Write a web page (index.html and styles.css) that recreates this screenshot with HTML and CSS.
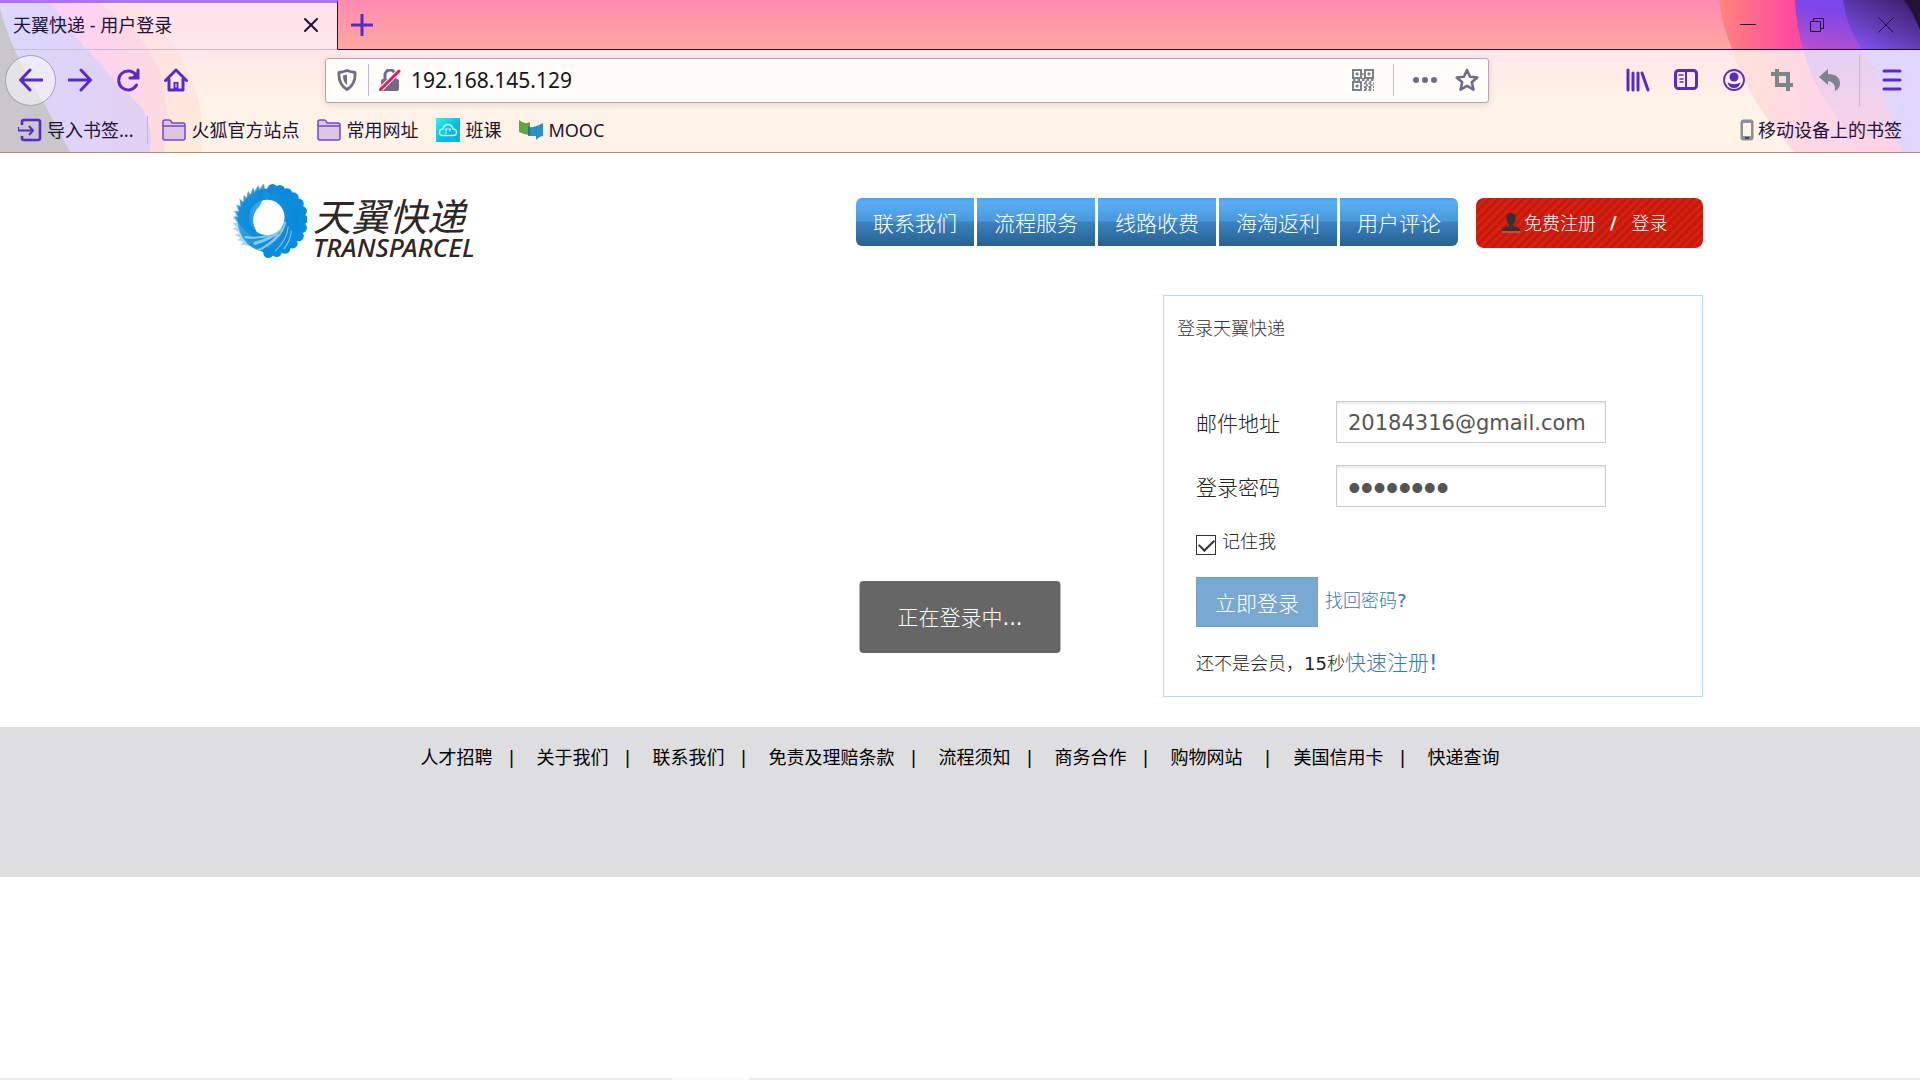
FILE: index.html
```html
<!DOCTYPE html>
<html lang="zh-CN">
<head>
<meta charset="utf-8">
<title>天翼快递 - 用户登录</title>
<link rel="stylesheet" href="styles.css">
</head>
<body>
<header class="browser">
  <svg class="theme theme-left" width="210" height="152" viewBox="0 0 210 152" aria-hidden="true">
    <defs>
      <linearGradient id="l1" x1="0" y1="0" x2="0" y2="1"><stop offset="0" stop-color="#ffdfe6"/><stop offset="1" stop-color="#ffead9"/></linearGradient>
      <linearGradient id="l2" x1="0" y1="0" x2="1" y2="0"><stop offset=".4" stop-color="#fcd0f6"/><stop offset="1" stop-color="#ffdadf"/></linearGradient>
      <linearGradient id="l3" x1="0" y1="0" x2="1" y2="0"><stop offset="0" stop-color="#dcd8fc"/><stop offset="1" stop-color="#e2d0f2"/></linearGradient>
      <linearGradient id="l4" x1="0" y1="0" x2="1" y2="0"><stop offset="0" stop-color="#dcd7fd"/><stop offset="1" stop-color="#dad2f5"/></linearGradient>
    </defs>
    <path d="M0 3H132Q188 50 200 107Q203 130 201 152H0Z" fill="url(#l1)"/>
    <path d="M0 3H98Q152 34 164 88Q170 118 164 152H0Z" fill="url(#l2)"/>
    <path d="M0 3H50Q76 42 142 108Q154 128 150 152H0Z" fill="url(#l3)"/>
    <path d="M0 3H50Q76 42 104 66L70 152H0Z" fill="url(#l4)" opacity=".6"/>
    <path d="M0 8Q10 50 45 105L70 152H0Z" fill="#c9c6cc"/>
    <path d="M10 49.500H210" stroke="#c9bccb"/>
  </svg>
  <svg class="theme theme-right" width="240" height="152" viewBox="0 0 240 152" aria-hidden="true">
    <defs>
      <linearGradient id="r1" x1="0" y1="0" x2="1" y2="0"><stop offset="0" stop-color="#ff857c"/><stop offset=".35" stop-color="#ff4b9f"/></linearGradient>
      <linearGradient id="r2" x1="0" y1="1" x2=".4" y2="0"><stop offset="0" stop-color="#ba50cb"/><stop offset=".8" stop-color="#7b46ea"/></linearGradient>
      <linearGradient id="r3" x1="0" y1="1" x2=".8" y2="0"><stop offset="0" stop-color="#8658ff"/><stop offset="1" stop-color="#402070"/></linearGradient>
      <linearGradient id="r4" x1="0" y1="0" x2="1" y2="0"><stop offset="0" stop-color="#ffe2d8"/><stop offset=".5" stop-color="#ffd5e8"/></linearGradient>
      <linearGradient id="r5" x1="0" y1="0" x2="0" y2="1"><stop offset="0" stop-color="#e2d0f3"/><stop offset="1" stop-color="#ffd3e4"/></linearGradient>
    </defs>
    <path d="M39 0Q42 26 52 49H240V0Z" fill="url(#r1)"/>
    <path d="M115 0Q116 26 123 49H240V0Z" fill="url(#r2)"/>
    <path d="M163 0Q166 26 182 49H240V0Z" fill="url(#r3)"/>
    <path d="M224 0Q234 14 240 30V0Z" fill="#241138"/>
    <path d="M52 50Q68 100 114 152H240V50Z" fill="url(#r4)"/>
    <path d="M123 50Q134 90 160 120L180 152H240V50Z" fill="url(#r5)"/>
    <path d="M182 50Q206 90 221 152H240V50Z" fill="#e1d6ff"/>
  </svg>

  <div class="tabs">
    <div class="tab">
      <span>天翼快递 - 用户登录</span>
      <button class="bare" aria-label="关闭标签页"><svg width="16" height="16" viewBox="0 0 16 16"><path d="M2 2L14 14M14 2L2 14" stroke="#20123a" stroke-width="2" stroke-linecap="round"/></svg></button>
    </div>
    <button class="bare new-tab" aria-label="新建标签页"><svg width="22" height="22" viewBox="0 0 22 22"><path d="M11 1V21M1 11H21" stroke="#592acb" stroke-width="3" stroke-linecap="round"/></svg></button>
    <div class="window-buttons">
      <button class="bare" aria-label="最小化"><svg width="16" height="16" viewBox="0 0 16 16"><path d="M0 7.500H16" stroke="#20123a"/></svg></button>
      <button class="bare" aria-label="还原"><svg width="16" height="16" viewBox="0 0 16 16" fill="none" stroke="#20123a"><path d="M1.500 4.500H11.500V14.500H1.500ZM4.500 4.500V1.500H14.500V11.500H11.500"/></svg></button>
      <button class="bare" aria-label="关闭"><svg width="16" height="16" viewBox="0 0 16 16"><path d="M.5 .5L15.500 15.500M15.500 .5L.5 15.500" stroke="#20123a"/></svg></button>
    </div>
  </div>

  <div class="toolbar">
    <button class="bare back" aria-label="后退"><svg class="ico" viewBox="0 0 24 24"><path d="M23 12H2M11 2L1.500 12L11 22"/></svg></button>
    <button class="bare slot" aria-label="前进"><svg class="ico" viewBox="0 0 24 24"><path d="M1 12H22M13 2L22.500 12L13 22"/></svg></button>
    <button class="bare slot" aria-label="刷新"><svg class="ico" viewBox="0 0 24 24"><path d="M20 7A9.500 9.500 0 1 0 20.500 17"/><path d="M22 2V10H14" stroke-linejoin="miter"/><path d="M22 3V10H15Z" fill="#592acb" stroke="none"/></svg></button>
    <button class="bare slot" aria-label="主页"><svg class="ico" viewBox="0 0 24 24"><path d="M1.500 12.500L12 2L22.500 12.500M5 11V22H19V11"/><path d="M12 14V22" stroke-width="5" stroke-linecap="butt"/><path d="M12 16V19" stroke="#fff" stroke-width="1"/></svg></button>
    <span class="spring"></span>
    <div class="urlbar">
      <svg class="shield" width="20" height="22" viewBox="0 0 20 22"><path d="M2 3.500Q6 3 10 1.500Q14 3 18 3.500Q19 15 10 20.500Q1 15 2 3.500Z" fill="none" stroke="#756a85" stroke-width="2.800" stroke-linejoin="round"/><path d="M10 5.500V16Q6 13 6 6.500Z" fill="#756a85"/></svg>
      <span class="divider"></span>
      <svg class="lock" width="22" height="22" viewBox="0 0 22 22"><path d="M6 11V6A5 5 0 0 1 16 6V11" fill="none" stroke="#756a85" stroke-width="3"/><rect x="2" y="10" width="18" height="12" rx="2" fill="#756a85"/><path d="M2 20L20 2" stroke="#fffafa" stroke-width="5"/><path d="M1.500 20.500L20 2" stroke="#ff0f4d" stroke-width="3" stroke-linecap="round"/></svg>
      <input type="text" aria-label="地址" value="192.168.145.129">
      <svg width="22" height="22" viewBox="0 0 22 22" fill="none" stroke="#7c828c" stroke-width="2"><path d="M1 1H9V9H1ZM13 1H21V9H13ZM1 13H9V21H1Z"/><path d="M4 4H6V6H4ZM16 4H18V6H16ZM4 16H6V18H4Z" fill="#7c828c" stroke-width="1"/><path d="M9 5H13M11 9V13M1 11H22M12 14.500H22M12 18H22M12 21H22" stroke-dasharray="2.500 2"/><path d="M13 12.800H22M14 16.200H22M13 19.600H22" stroke-dasharray="2 2.500"/></svg>
      <span class="divider tail"></span>
      <svg width="24" height="22" viewBox="0 0 24 22" fill="#756a85"><circle cx="3" cy="11" r="3"/><circle cx="12" cy="11" r="3"/><circle cx="21" cy="11" r="3"/></svg>
      <svg class="star" width="24" height="24" viewBox="0 0 24 24"><path d="M12 2L15 8.800L22.300 9.500L16.800 14.300L18.500 21.700L12 17.800L5.500 21.700L7.200 14.300L1.700 9.500L9 8.800Z" fill="none" stroke="#756a85" stroke-width="2.600" stroke-linejoin="round"/></svg>
    </div>
    <span class="spring"></span>
    <button class="bare slot" aria-label="书签库"><svg class="ico" viewBox="0 0 24 24" stroke-linecap="round"><path d="M2 2V22M7 5V22M12 5V22M16 5L22 22"/></svg></button>
    <button class="bare slot" aria-label="侧栏"><svg class="ico" viewBox="0 0 24 24"><rect x="1.500" y="2.500" width="21" height="18" rx="3"/><path d="M12 3V20" stroke-width="2"/><path d="M5 7H9M6 11H9M6 14H9" stroke-width="1.500"/></svg></button>
    <button class="bare slot" aria-label="账户"><svg class="ico" viewBox="0 0 24 24"><circle cx="12" cy="12" r="10" stroke-width="1.800"/><circle cx="12" cy="9" r="4.500" fill="#592acb" stroke="none"/><path d="M5.500 14.500Q12 18 18.500 14.500Q17 20 12 20Q7 20 5.500 14.500Z" fill="#592acb" stroke="none"/></svg></button>
    <button class="bare slot" aria-label="截图"><svg class="ico crop" viewBox="0 0 24 24"><path d="M7 1V17H23M1 6H18V23"/></svg></button>
    <button class="bare slot" aria-label="撤销"><svg class="ico" viewBox="0 0 24 24"><path d="M1 9L10 1V6Q22 6 22 16Q22 20 17 23Q18 14 10 13V17Z" fill="#7c858e" stroke="none"/></svg></button>
    <span class="divider tall"></span>
    <button class="bare slot" aria-label="菜单"><svg class="ico" viewBox="0 0 24 24"><path d="M4 3H20M4 12H20M4 21H20"/></svg></button>
  </div>

  <nav class="bookmarks" aria-label="书签">
    <a href="#"><svg class="bm" viewBox="0 0 24 24" fill="none" stroke="#592acb" stroke-width="2.600"><path d="M4 7V4Q4 2 6 2H20Q22 2 22 4V20Q22 22 20 22H6Q4 22 4 20V18"/><path d="M0 9V12.500H14M11 8L15 12.500L11 17" stroke-width="2"/></svg>导入书签...</a>
    <span class="divider"></span>
    <a href="#"><svg class="bm" viewBox="0 0 24 24"><path d="M1 20V4Q1 2 3 2H7Q9 2 10 5H21Q23 5 23 7V20Q23 22 21 22H3Q1 22 1 20ZM1 8H23" fill="#dcc6e0" stroke="#7047cf" stroke-width="1.500"/></svg>火狐官方站点</a>
    <a href="#"><svg class="bm" viewBox="0 0 24 24"><path d="M1 20V4Q1 2 3 2H7Q9 2 10 5H21Q23 5 23 7V20Q23 22 21 22H3Q1 22 1 20ZM1 8H23" fill="#dcc6e0" stroke="#7047cf" stroke-width="1.500"/></svg>常用网址</a>
    <a href="#"><svg class="bm" viewBox="0 0 24 24"><defs><linearGradient id="bk" x1="0" y1="0" x2="1" y2="1"><stop offset="0" stop-color="#2df3ee"/><stop offset=".6" stop-color="#08b9dd"/></linearGradient></defs><rect width="24" height="24" fill="url(#bk)"/><path d="M7 17.500Q3 17.500 3.500 13.500Q4 11 7 11Q8 6.500 12 6.500Q16 6.500 17 11Q20.500 11 20.500 14.500Q20.500 17.500 17 17.500Z" fill="none" stroke="#bdf8f5" stroke-width="1.300"/><path d="M9 11H15M10 11V16M14 11V14" stroke="#bdf8f5" fill="none"/></svg>班课</a>
    <a href="#"><svg class="bm" viewBox="0 0 24 24"><path d="M0 2Q6 7 11 4V17Q5 17 0 14Z" fill="#5fa83c"/><path d="M9 9Q16 10 24 5V18Q21 18 17 22V18H9Z" fill="#2d8fc7"/><path d="M9 9L11 8.500V17H9Z" fill="#2b7580"/></svg>MOOC</a>
    <a class="mobile" href="#"><svg width="14" height="22" viewBox="0 0 14 22"><rect x="1" y="1" width="12" height="20" rx="2" fill="#8b9398" stroke="#868d92"/><rect x="3" y="4" width="8" height="13" fill="#fff2e8"/><path d="M5 19H9" stroke="#444" stroke-width="2"/></svg>移动设备上的书签</a>
  </nav>
</header>

<div class="page">
  <div class="site-header">
    <a class="logo" href="#">
      <svg width="74" height="76" viewBox="1 2 71 73" aria-hidden="true">
        <defs>
          <linearGradient id="sw" x1="0" y1="0" x2="1" y2="0"><stop offset="0" stop-color="#4db2ea"/><stop offset=".35" stop-color="#1593dd"/><stop offset="1" stop-color="#0787d9"/></linearGradient>
          <path id="fe" d="M-17 5C-21 -4 -28 -10 -36 -12C-31 -2 -28 10 -15 17Z"/>
          <path id="fs" d="M-17 4C-20 -5 -26 -12 -33 -15C-31 -6 -28 4 -20 10Z"/>
        </defs>
        <path fill-rule="evenodd" fill="url(#sw)" d="M37 7A31 31 0 1 1 36 69A31 31 0 1 1 37 7ZM33 18A17 17 0 1 0 34 52A17 17 0 1 0 33 18Z"/>
        <g transform="translate(38 38)" fill="#0b8bdb">
          <g opacity=".35"><use href="#fe" transform="rotate(-56)"/><use href="#fe" transform="rotate(-48)"/><use href="#fe" transform="rotate(-40)"/><use href="#fe" transform="rotate(-30)"/><use href="#fe" transform="rotate(-22)"/><use href="#fe" transform="rotate(-13)"/><use href="#fe" transform="rotate(-4)"/><use href="#fe" transform="rotate(6)"/><use href="#fe" transform="rotate(16)"/></g>
          <g opacity=".8"><use href="#fs" transform="rotate(-18)"/><use href="#fs" transform="rotate(-9)"/><use href="#fs"/><use href="#fs" transform="rotate(9)"/><use href="#fs" transform="rotate(18)"/><use href="#fs" transform="rotate(27)"/><use href="#fs" transform="rotate(36)"/><use href="#fs" transform="rotate(45)"/><use href="#fs" transform="rotate(54)"/></g>
          <g><circle cx="1" cy="-30" r="5"/><circle cx="8" cy="-29" r="5"/><circle cx="15" cy="-26" r="5"/><circle cx="21" cy="-22" r="5"/><circle cx="26" cy="-16" r="5"/><circle cx="29" cy="-9" r="5"/><circle cx="30" cy="-1" r="5"/><circle cx="29" cy="7" r="5"/><circle cx="26" cy="15" r="5"/><circle cx="20" cy="22" r="5"/><circle cx="13" cy="27" r="5"/><circle cx="5" cy="30" r="5"/><circle cx="-3" cy="31" r="5"/></g>
        </g>
        <g fill="none" stroke="#fff" stroke-linecap="round" opacity=".5"><path d="M51 40Q49 52 34 62" stroke-width="2"/><path d="M54 44Q53 56 42 67"/><path d="M47 46Q38 56 22 60" stroke-width="3"/><path d="M57 48Q56 58 50 65"/><path d="M39 51Q26 56 13 54" stroke-width="2"/><path d="M44 52Q36 62 24 67" stroke-width="2"/></g>
      </svg>
      <span class="logo-text"><span class="logo-cn">天翼快递</span><span class="logo-en">TRANSPARCEL</span></span>
    </a>
    <nav class="main-nav" aria-label="主导航">
      <a href="#">联系我们</a><a href="#">流程服务</a><a href="#">线路收费</a><a href="#">海淘返利</a><a href="#">用户评论</a>
    </nav>
    <div class="account">
      <svg width="20" height="20" viewBox="0 0 20 20" aria-hidden="true"><path d="M10 0C14 0 15 3 14.500 6Q14 10 12 11V13Q19 14 19.500 18H.5Q1 14 8 13V11Q6 10 5.500 6C5 3 6 0 10 0Z" fill="#333"/><path d="M1 19H19" stroke="#e36a5c"/></svg>
      <a href="#">免费注册</a><span class="slash">/</span><a href="#">登录</a>
    </div>
  </div>

  <main>
    <form class="login">
      <h1>登录天翼快递</h1>
      <div class="row"><label for="mail">邮件地址</label><input id="mail" type="text" value="20184316@gmail.com"></div>
      <div class="row"><label for="pass">登录密码</label><input id="pass" type="password" value="password"></div>
      <div class="remember"><input id="keep" type="checkbox" checked><label for="keep">记住我</label></div>
      <div class="submit"><button type="button">立即登录</button><a href="#">找回密码<b>?</b></a></div>
      <p>还不是会员，<b>15</b>秒<a href="#">快速注册<span class="latin">!</span></a></p>
    </form>
  </main>
</div>

<footer>
  <a href="#">人才招聘</a><i>|</i><a href="#">关于我们</a><i>|</i><a href="#">联系我们</a><i>|</i><a href="#">免责及理赔条款</a><i>|</i><a href="#">流程须知</a><i>|</i><a href="#">商务合作</a><i>|</i><a href="#">购物网站</a><i class="wide">|</i><a href="#">美国信用卡</a><i>|</i><a href="#">快递查询</a>
</footer>

<div class="page-end"></div>

<div class="toast" role="status">正在登录中<span class="latin">...</span></div>
</body>
</html>
```

FILE: styles.css
```css
* { box-sizing: border-box; }

body {
  display: flex;
  flex-direction: column;
  min-height: 100vh;
  margin: 0;
  background: #fff;
  color: #222;
  font: 300 18px/26px "DejaVu Sans", "Noto Sans CJK SC", sans-serif;
}

a { text-decoration: none; }

.latin { font-weight: 400; }

/* browser chrome */
.browser {
  position: relative;
  border-bottom: 1px solid #b98778;
  background: linear-gradient(#ffe6ea 50px, #fff2e6 100px);
  color: #20123a;
  font: 400 18px/26px "Noto Sans", "Noto Sans CJK SC", sans-serif;
}

.bare {
  display: flex;
  align-items: center;
  justify-content: center;
  padding: 0;
  border: 0;
  background: none;
}

.theme { position: absolute; top: 0; }
.theme-left { left: 0; }
.theme-right { right: 0; }

.tabs, .toolbar, .bookmarks {
  display: flex;
  align-items: center;
}

.tabs {
  height: 50px;
  border-bottom: 1px solid #20123a;
  background: linear-gradient(#ff8ab0, #ffa8a0);
}

.tab {
  display: flex;
  align-items: center;
  justify-content: space-between;
  width: 338px;
  height: 50px;
  margin-bottom: -1px;
  padding: 0 18px 2px 13px;
  border-top: 3px solid #ab71ff;
  border-right: 1px solid #20123a;
  border-bottom: 1px solid #cdbcc8;
  background: linear-gradient(#ffdfe9, #ffe8ea);
}

.tab > *, .window-buttons, .toolbar > *, .bookmarks > * { position: relative; z-index: 1; }

.new-tab { margin-left: 13px; }

.window-buttons {
  display: flex;
  gap: 53px;
  margin-left: auto;
  padding-right: 26px;
}

.toolbar {
  height: 60px;
  padding: 0 4px 0 5px;
}

.ico {
  width: 24px;
  height: 24px;
  fill: none;
  stroke: #592acb;
  stroke-width: 3;
  stroke-linecap: round;
  stroke-linejoin: round;
}

.crop {
  stroke: #7c858e;
  stroke-width: 4;
  stroke-linecap: butt;
  stroke-linejoin: miter;
}

.slot { width: 48px; height: 48px; }

.back {
  width: 51px;
  height: 51px;
  border: 1px solid #a79fae;
  border-radius: 50%;
  background: rgba(255, 255, 255, .5);
}

.spring { flex: 0 1 125px; }

.divider {
  width: 1px;
  height: 32px;
  background: #c3b8c8;
}

.divider.tall { height: 51px; margin: 0 8px 0 5px; }

.urlbar {
  display: flex;
  flex: 1;
  align-items: center;
  height: 45px;
  padding: 0 9px 0 11px;
  border: 1px solid #b3a6b0;
  border-radius: 3px;
  background: #fffcfa;
  box-shadow: 0 2px 6px rgba(80, 30, 50, .12);
}

.urlbar input {
  flex: 1;
  min-width: 0;
  padding: 0;
  border: 0;
  background: none;
  color: #15141a;
  font: 400 21px/30px "Noto Sans", sans-serif;
}

.shield { margin-right: 11px; }
.lock { margin: 0 10px; }
.tail { margin: 0 19px; }
.star { margin-left: 18px; }

.bookmarks {
  height: 42px;
  padding: 0 18px 2px;
  gap: 18px;
}

.bookmarks a {
  display: flex;
  align-items: center;
  gap: 5px;
  color: #20123a;
}

.bookmarks .divider { margin: 0 -4px; height: 28px; }
.bookmarks .mobile { margin-left: auto; gap: 4px; }
.bm { width: 24px; height: 24px; }

/* site */
.page {
  width: 100%;
  max-width: 1518px;
  margin: 0 auto;
  padding: 30px 16px;
}

.site-header {
  display: flex;
  height: 112px;
  padding-left: 16px;
}

.logo { display: flex; align-items: flex-start; gap: 6px; }
.logo-text { display: flex; flex-direction: column; padding-top: 13px; color: #2f2725; }
.logo-cn { font: italic 400 38px/38px "Noto Sans CJK SC", sans-serif; }
.logo-en { font: italic 500 26px/26px "Noto Sans", sans-serif; }

.main-nav {
  display: flex;
  gap: 3px;
  height: 48px;
  margin: 15px 18px 0 auto;
}

.main-nav a {
  padding: 0 17px;
  background: linear-gradient(#42a3f5, #5aaef5 4px, #4a97da 23px, #3a83c2 24px, #28608f);
  color: #fff;
  font-size: 21px;
  line-height: 52px;
}

.main-nav a:first-child { border-radius: 6px 0 0 6px; }
.main-nav a:last-child { border-radius: 0 6px 6px 0; }

.account {
  display: flex;
  align-items: center;
  width: 227px;
  height: 50px;
  margin-top: 15px;
  padding-left: 25px;
  border-radius: 8px;
  background: repeating-linear-gradient(135deg, #d6210f 0 3px, #c41a0d 3px 6px);
  color: #fff;
  line-height: 28px;
}

.account a { padding-top: 2px; color: #fff; margin-left: 3px; }
.account .slash { margin: 0 12px 0 14px; font-weight: 700; }

.login {
  width: 540px;
  margin-left: auto;
  padding: 20px 32px 18px;
  border: 1px solid #b5dcfa;
}

.login h1 {
  margin: 0 0 59px -19px;
  color: #333;
  font-size: 18px;
  font-weight: 300;
  line-height: 26px;
}

.row {
  display: flex;
  align-items: center;
  height: 42px;
  margin-bottom: 22px;
  font-size: 21px;
}

.row label { width: 140px; padding-top: 4px; }

.row input {
  width: 270px;
  height: 42px;
  padding: 2px 11px 0;
  border: 1px solid #ccc;
  background: #fff;
  box-shadow: inset 0 2px 2px rgba(0, 0, 0, .08);
  color: #555;
  font: 400 21px/30px "DejaVu Sans", sans-serif;
}

.row input[type="password"] {
  padding-top: 4px;
  font: 400 36px/36px "Liberation Sans", sans-serif;
}

.remember {
  display: flex;
  gap: 6px;
  height: 48px;
}

.remember input {
  display: grid;
  place-items: center;
  width: 20px;
  height: 20px;
  margin: 6px 0 0;
  border: 1px solid #333;
  appearance: none;
}

.remember input:checked::after {
  width: 13px;
  height: 7px;
  margin-top: -4px;
  border: solid #333;
  border-width: 0 0 2px 2px;
  content: "";
  transform: rotate(-45deg);
}

.submit {
  display: flex;
  align-items: center;
  gap: 7px;
}

.submit button {
  width: 122px;
  height: 50px;
  padding: 0;
  border: 1px solid #6f9fc8;
  background: #79a8d0;
  color: #fff;
  font: 300 21px/30px "Noto Sans CJK SC", sans-serif;
}

.login a { color: #337ab7; }
.submit a { margin-top: -2px; }

.login p { margin: 22px 0 0; line-height: 28px; }
.login p a { font-size: 21px; }

footer {
  display: flex;
  justify-content: center;
  min-height: 150px;
  padding-top: 18px;
  background: #dedee0;
  font-weight: 400;
}

footer a, footer i { color: #000; }

footer i {
  width: 44px;
  padding-left: 16px;
  font-style: normal;
}

footer .wide { width: 51px; padding-left: 22px; }

.page-end {
  height: 2px;
  margin-top: auto;
  background: linear-gradient(90deg, #ebebeb 35%, #fafafa 35% 39%, #ebebeb 39%);
}

/* progress message over the page */
.toast {
  position: fixed;
  top: 617px;
  left: 50%;
  padding: 22px 38px 20px;
  border-radius: 4px;
  background: #666;
  color: #fff;
  font-size: 21px;
  line-height: 30px;
  transform: translate(-50%, -50%);
}
```
